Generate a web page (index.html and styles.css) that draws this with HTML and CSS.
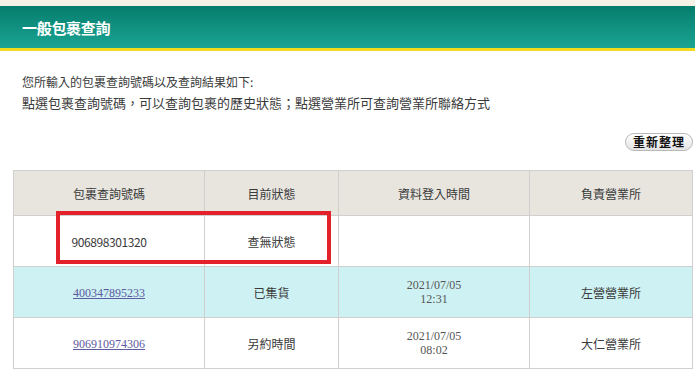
FILE: index.html
```html
<!DOCTYPE html>
<html lang="zh-Hant">

<head>
    <meta charset="UTF-8">
    <meta name="viewport" content="width=device-width, initial-scale=1.0">
    <title>一般包裹查詢</title>
    <link rel="stylesheet" href="styles.css">
</head>

<body>

    <div class="top-strip"></div>

    <!-- page title bar -->
    <div class="title-bar">
        <h1>一般包裹查詢</h1>
    </div>

    <div class="intro">
        <p>您所輸入的包裹查詢號碼以及查詢結果如下:</p>
        <p class="hint">點選包裹查詢號碼，可以查詢包裹的歷史狀態；點選營業所可查詢營業所聯絡方式</p>
    </div>

    <div class="actions">
        <button class="refresh-btn">重新整理</button>
    </div>

    <!-- result table -->
    <div class="result-wrap">
        <table class="result-table">
            <thead>
                <tr>
                    <th class="col-no">包裹查詢號碼</th>
                    <th class="col-status">目前狀態</th>
                    <th class="col-time">資料登入時間</th>
                    <th class="col-office">負責營業所</th>
                </tr>
            </thead>
            <tbody>
                <tr>
                    <td class="plain-no">906898301320</td>
                    <td>查無狀態</td>
                    <td></td>
                    <td></td>
                </tr>
                <tr class="hl">
                    <td><a href="#">400347895233</a></td>
                    <td>已集貨</td>
                    <td class="time">2021/07/05<br>12:31</td>
                    <td>左營營業所</td>
                </tr>
                <tr>
                    <td><a href="#">906910974306</a></td>
                    <td>另約時間</td>
                    <td class="time">2021/07/05<br>08:02</td>
                    <td>大仁營業所</td>
                </tr>
            </tbody>
        </table>
        <div class="mark"></div>
    </div>

</body>

</html>
```

FILE: styles.css
```css
* {
    margin: 0;
    padding: 0;
    box-sizing: border-box;
}

body {
    font-family: "Noto Sans CJK TC", "Noto Sans", sans-serif;
    background: #fff;
    color: #333;
    font-size: 12px;
}

.top-strip {
    height: 6px;
    background: #f6f2e7;
}

/* Title bar */
.title-bar {
    height: 45px;
    background: linear-gradient(to bottom, #067d6d, #1aa493);
    border-bottom: 3px solid #f2da1f;
    padding-left: 22px;
    display: flex;
    align-items: center;
}

.title-bar h1 {
    color: #fff;
    font-size: 15px;
    font-weight: bold;
    letter-spacing: -0.3px;
}

.intro {
    padding: 20px 22px 0;
    line-height: 21px;
    color: #3a3a3a;
}

.intro .hint {
    font-size: 13px;
}

.actions {
    display: flex;
    justify-content: flex-end;
    padding: 20px 2px 0 0;
}

.refresh-btn {
    font-family: inherit;
    font-size: 12px;
    font-weight: bold;
    color: #111;
    letter-spacing: 1px;
    height: 18px;
    width: 68px;
    line-height: 16px;
    border: 1px solid #b9b9b9;
    border-radius: 9px;
    background: linear-gradient(to bottom, #ffffff, #e4e4e4);
    cursor: pointer;
}

/* Result table */
.result-wrap {
    position: relative;
    margin: 19px 2px 0 13px;
}

.result-table {
    width: 680px;
    border-collapse: collapse;
    table-layout: fixed;
}

.result-table th,
.result-table td {
    border: 1px solid #cfcfcf;
    text-align: center;
    font-weight: normal;
    color: #3a3a3a;
}

.result-table th {
    background: #e8e5df;
    height: 45px;
}

.result-table td {
    height: 51px;
}

.col-no {
    width: 191px;
}

.col-status {
    width: 134px;
}

.col-time {
    width: 191px;
}

.result-table tr.hl td {
    background: #cef1f3;
}

.result-table a {
    font-family: "Liberation Serif", serif;
    color: #5c5aa0;
}

.plain-no {
    letter-spacing: -0.4px;
}

.time {
    font-family: "Liberation Serif", serif;
    line-height: 14px;
    color: #555 !important;
}

/* highlight box drawn over the first result */
.mark {
    position: absolute;
    left: 43px;
    top: 41px;
    width: 275px;
    height: 53px;
    border: 4px solid #e3212a;
}
```
